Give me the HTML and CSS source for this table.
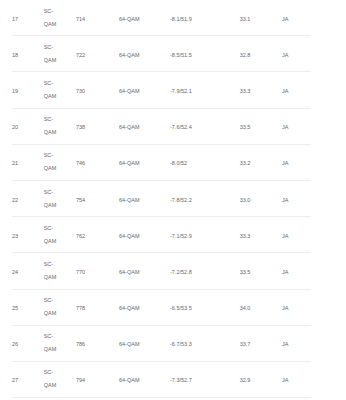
FILE: index.html
```html
<!DOCTYPE html>
<html>
<head>
<meta charset="utf-8">
<link rel="stylesheet" href="styles.css">
</head>
<body>
<table class="chan">
<colgroup>
<col class="c1"><col class="c2"><col class="c3"><col class="c4"><col class="c5"><col class="c6"><col class="c7">
</colgroup>
<tbody>
<tr><td>17</td><td class="type">SC-QAM</td><td>714</td><td>64-QAM</td><td>-8.1/51.9</td><td>33.1</td><td>JA</td></tr>
<tr><td>18</td><td class="type">SC-QAM</td><td>722</td><td>64-QAM</td><td>-8.5/51.5</td><td>32.8</td><td>JA</td></tr>
<tr><td>19</td><td class="type">SC-QAM</td><td>730</td><td>64-QAM</td><td>-7.9/52.1</td><td>33.3</td><td>JA</td></tr>
<tr><td>20</td><td class="type">SC-QAM</td><td>738</td><td>64-QAM</td><td>-7.6/52.4</td><td>33.5</td><td>JA</td></tr>
<tr><td>21</td><td class="type">SC-QAM</td><td>746</td><td>64-QAM</td><td>-8.0/52</td><td>33.2</td><td>JA</td></tr>
<tr><td>22</td><td class="type">SC-QAM</td><td>754</td><td>64-QAM</td><td>-7.8/52.2</td><td>33.0</td><td>JA</td></tr>
<tr><td>23</td><td class="type">SC-QAM</td><td>762</td><td>64-QAM</td><td>-7.1/52.9</td><td>33.3</td><td>JA</td></tr>
<tr><td>24</td><td class="type">SC-QAM</td><td>770</td><td>64-QAM</td><td>-7.2/52.8</td><td>33.5</td><td>JA</td></tr>
<tr><td>25</td><td class="type">SC-QAM</td><td>778</td><td>64-QAM</td><td>-6.5/53.5</td><td>34.0</td><td>JA</td></tr>
<tr><td>26</td><td class="type">SC-QAM</td><td>786</td><td>64-QAM</td><td>-6.7/53.3</td><td>33.7</td><td>JA</td></tr>
<tr><td>27</td><td class="type">SC-QAM</td><td>794</td><td>64-QAM</td><td>-7.3/52.7</td><td>32.9</td><td>JA</td></tr>
</tbody>
</table>
</body>
</html>
```

FILE: styles.css
```css
html, body {
  margin: 0;
  padding: 0;
  background: #ffffff;
}
body {
  padding-left: 12px;
}
.chan {
  border-collapse: collapse;
  table-layout: fixed;
  width: 298.7px;
  font-family: "Liberation Sans", Arial, sans-serif;
  font-size: 5.5px;
  line-height: 13px;
  color: #666666;
}
.chan td {
  padding: 7.6px 0 4.6px 0;
  border-bottom: 1px solid #ececec;
  vertical-align: middle;
  text-align: left;
}
.chan td.type {
  padding: 4.6px 12px 4.6px 0;
}
.c1 { width: 31.7px; }
.c2 { width: 32.3px; }
.c3 { width: 43px; }
.c4 { width: 51px; }
.c5 { width: 69.7px; }
.c6 { width: 42.3px; }
.c7 { width: 28.7px; }
```
